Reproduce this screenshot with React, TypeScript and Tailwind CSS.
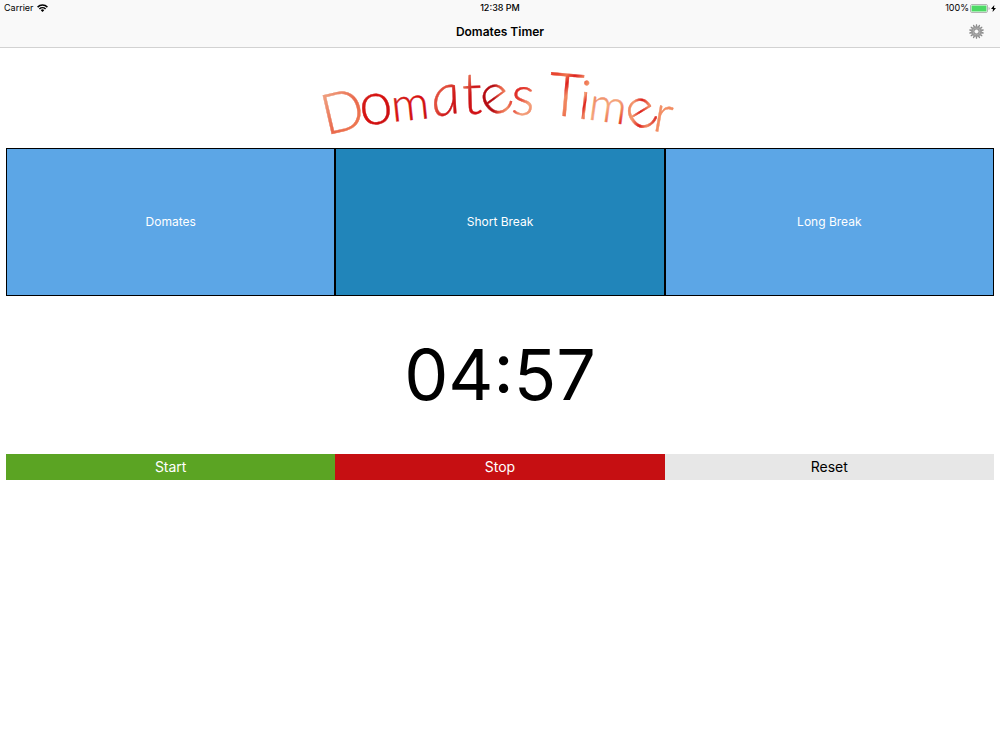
import React, { useState } from "react";

type Letter = { ch: string; x: number; y: number; rise: number; turn: number; size: number; fill: string; italic?: boolean };

// x and y are the middle of each letter; rise is the distance from there to its baseline.
const letters: Letter[] = [
  { ch: "D", x: 22, y: 50, rise: 21, turn: -13, size: 56, fill: "coral" },
  { ch: "o", x: 56, y: 49, rise: 15, turn: -9, size: 60, fill: "red" },
  { ch: "m", x: 90, y: 46, rise: 14, turn: -6, size: 47, fill: "red" },
  { ch: "a", x: 126, y: 40, rise: 15, turn: -10, size: 58, fill: "blush", italic: true },
  { ch: "t", x: 152, y: 34, rise: 20, turn: -2, size: 58, fill: "ember" },
  { ch: "e", x: 176, y: 39, rise: 15, turn: -36, size: 58, fill: "crimson" },
  { ch: "s", x: 203, y: 40, rise: 15, turn: 3, size: 55, fill: "fade" },
  { ch: "T", x: 246, y: 34, rise: 22, turn: 5, size: 60, fill: "stem" },
  { ch: "i", x: 265, y: 40, rise: 19, turn: 6, size: 54, fill: "streak" },
  { ch: "m", x: 288, y: 48, rise: 14, turn: 8, size: 47, fill: "peach" },
  { ch: "e", x: 321, y: 53, rise: 15, turn: -31, size: 58, fill: "streak" },
  { ch: "r", x: 343, y: 58, rise: 14, turn: 10, size: 52, fill: "tail" },
];

const gradients: { id: string; stops: [string, string][] }[] = [
  { id: "coral", stops: [["0", "#ee9c7c"], ["0.55", "#e9694c"], ["1", "#ef7b52"]] },
  { id: "red", stops: [["0", "#cf2320"], ["0.5", "#d8110f"], ["1", "#c80e12"]] },
  { id: "blush", stops: [["0", "#dd3a30"], ["0.4", "#e2523f"], ["0.7", "#d01a1a"], ["1", "#c50f14"]] },
  { id: "ember", stops: [["0", "#ef8a63"], ["0.45", "#cc1417"], ["1", "#d31217"]] },
  { id: "crimson", stops: [["0", "#b80d13"], ["0.5", "#b40c12"], ["0.65", "#e6553f"], ["0.85", "#ef9068"], ["1", "#e1231e"]] },
  { id: "fade", stops: [["0", "#d9151a"], ["0.45", "#e54335"], ["0.75", "#f4a27c"], ["1", "#f08e6c"]] },
  { id: "stem", stops: [["0", "#e8452f"], ["0.15", "#ef7750"], ["0.3", "#dd1f1c"], ["0.5", "#f08b63"], ["0.75", "#ef7b55"], ["1", "#d91d1d"]] },
  { id: "streak", stops: [["0", "#ee6242"], ["0.35", "#f39a70"], ["0.55", "#dd1f1c"], ["0.75", "#f08b63"], ["1", "#d91d1d"]] },
  { id: "peach", stops: [["0", "#ec8460"], ["0.5", "#f5a57c"], ["0.8", "#ee7650"], ["1", "#e33528"]] },
  { id: "tail", stops: [["0", "#f2936a"], ["0.7", "#f28b60"], ["0.85", "#e8432f"], ["1", "#d8171a"]] },
];

function Logo() {
  return (
    <svg viewBox="0 0 360 80" width="360" height="80" role="img" aria-label="Domates Timer" className="overflow-visible">
      <defs>
        {gradients.map((g) => (
          <linearGradient key={g.id} id={g.id} x1="0.3" y1="0.2" x2="0.7" y2="0.9">
            {g.stops.map(([offset, color]) => (
              <stop key={offset} offset={offset} stopColor={color} />
            ))}
          </linearGradient>
        ))}
      </defs>
      {letters.map((l, i) => (
        <text
          key={i}
          x="0"
          y={l.rise}
          textAnchor="middle"
          transform={`translate(${l.x} ${l.y}) rotate(${l.turn})`}
          fontFamily="Lato, sans-serif"
          fontWeight="300"
          fontStyle={l.italic ? "italic" : "normal"}
          fontSize={l.size}
          fill={`url(#${l.fill})`}
          stroke={`url(#${l.fill})`}
          strokeWidth="0.4"
        >
          {l.ch}
        </text>
      ))}
    </svg>
  );
}

function WifiIcon() {
  return (
    <svg viewBox="0 0 22 16" width="11" height="8" aria-hidden="true" fill="none" stroke="#000" strokeWidth="3">
      <path d="M1.200 6.200a14 14 0 0 1 19.600 0" />
      <path d="M4.800 10a8.800 8.800 0 0 1 12.400 0" />
      <path d="M11 15.800 7.600 12.400a4.800 4.800 0 0 1 6.800 0z" fill="#000" stroke="none" />
    </svg>
  );
}

function BatteryIcon() {
  return (
    <svg viewBox="0 0 20 9" width="20" height="9" aria-hidden="true">
      <rect x="0.5" y="0.5" width="17" height="8" rx="1.5" fill="#fff" stroke="#b4b4b4" />
      <rect x="1.500" y="1.500" width="15" height="6" rx="0.5" fill="#4cd964" />
      <path d="M18.600 3v3q1-.4 1-1.500T18.600 3z" fill="#a8a8a8" />
    </svg>
  );
}

function BoltIcon() {
  return (
    <svg viewBox="0 0 5 7" width="5" height="7" aria-hidden="true">
      <path d="M3.300 0 0 4h2L1.600 7 5 2.900H3z" fill="#000" />
    </svg>
  );
}

function GearIcon() {
  const teeth = Array.from({ length: 14 }, (_, i) => (i * 360) / 14);
  return (
    <svg viewBox="0 0 30 30" width="15" height="15" aria-hidden="true">
      <g fill="#8a8a8a">
        {teeth.map((a) => (
          <path key={a} d="M13.200 6 13.900 .3h2.200L16.800 6z" transform={`rotate(${a} 15 15)`} />
        ))}
      </g>
      <circle cx="15" cy="15" r="8.500" fill="none" stroke="#9a9a9a" strokeWidth="4" />
      <circle cx="15" cy="15" r="5.800" fill="#b8b8b8" stroke="#7c7c7c" strokeWidth="1.500" />
      <circle cx="15" cy="15" r="3.600" fill="#f9f9f9" />
    </svg>
  );
}

const modes = [
  { name: "Domates", time: "25:00" },
  { name: "Short Break", time: "04:57" },
  { name: "Long Break", time: "15:00" },
];

export default function App() {
  const [mode, setMode] = useState(1);
  return (
    <div className="min-h-screen bg-white font-['Inter',sans-serif] text-black">
      <header className="border-b border-[#d2d2d2] bg-[#f9f9f9]">
        <div className="grid h-4 grid-cols-3 items-center text-[9px] leading-4">
          <div className="flex items-center gap-[3px] pl-1">
            <span>Carrier</span>
            <WifiIcon />
          </div>
          <div className="text-center font-medium">12:38 PM</div>
          <div className="flex items-center justify-end gap-px pr-1">
            <span>100%</span>
            <BatteryIcon />
            <BoltIcon />
          </div>
        </div>
        <div className="grid h-[31px] grid-cols-3 items-center">
          <h1 className="col-start-2 text-center text-[12px] font-semibold leading-4">Domates Timer</h1>
          <button type="button" aria-label="Settings" className="mr-4 justify-self-end">
            <GearIcon />
          </button>
        </div>
      </header>
      <main className="px-1.5">
        <div className="flex justify-center pt-3 pb-2">
          <Logo />
        </div>
        <div className="grid h-[148px] grid-cols-3 text-[12px] text-white">
          {modes.map((m, i) => (
            <button
              key={m.name}
              type="button"
              aria-pressed={mode === i}
              onClick={() => setMode(i)}
              className={mode === i ? "border border-black bg-[#2185ba]" : "border border-black bg-[#5ca6e6]"}
            >
              {m.name}
            </button>
          ))}
        </div>
        <div role="timer" className="flex h-[158px] items-center justify-center text-[70px] leading-none">
          {modes[mode].time}
        </div>
        <div className="grid h-[26px] grid-cols-3 text-[14px] leading-5">
          <button type="button" className="bg-[#5ba423] text-white">Start</button>
          <button type="button" className="bg-[#c60f12] text-white">Stop</button>
          <button type="button" className="bg-[#e7e7e7] text-black">Reset</button>
        </div>
      </main>
    </div>
  );
}
